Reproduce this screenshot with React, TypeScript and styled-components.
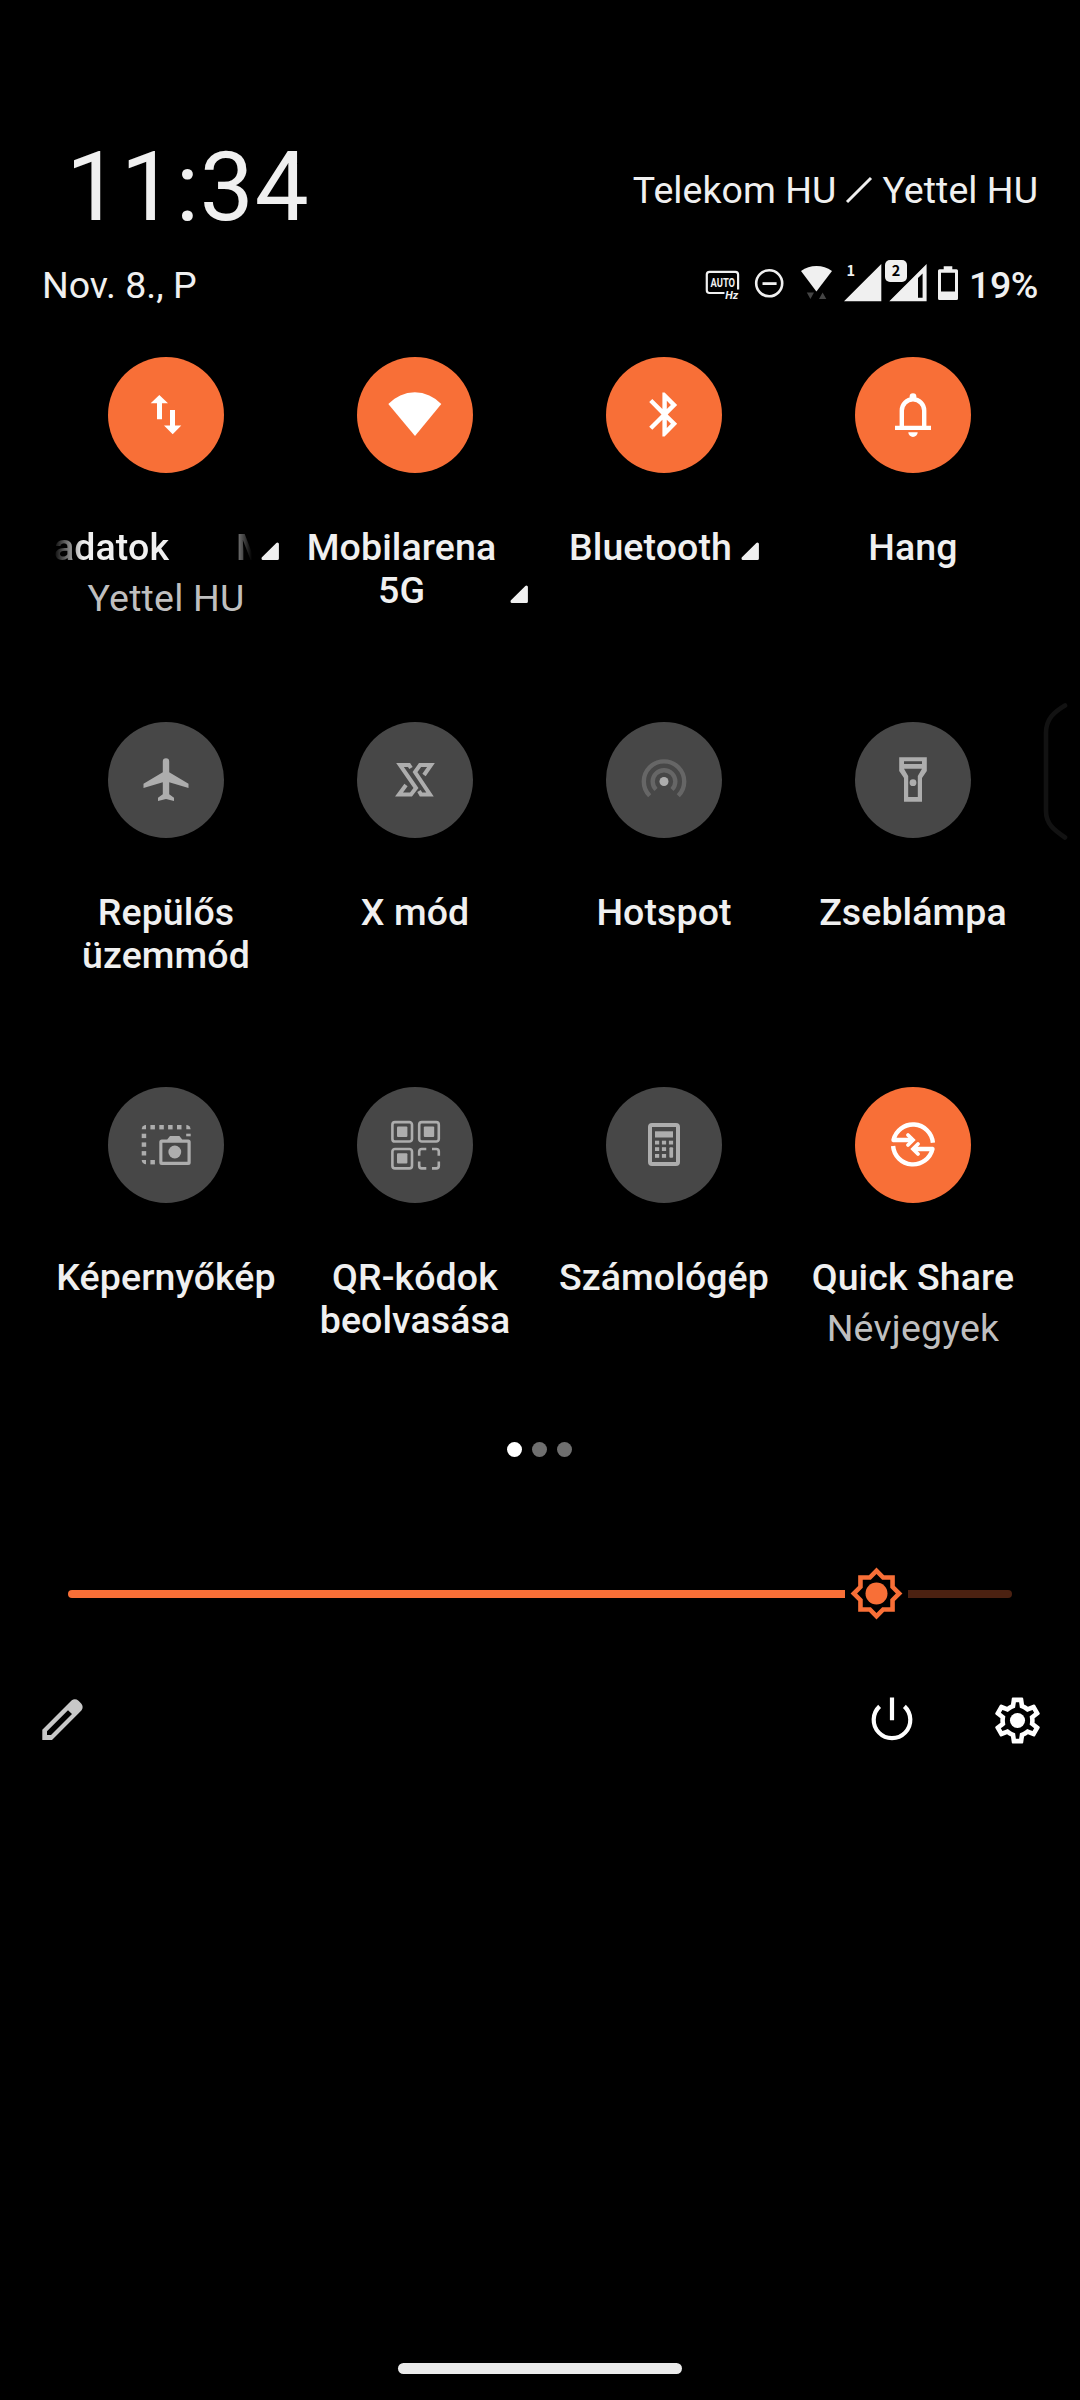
import React from "react";
import styled, { createGlobalStyle } from "styled-components";

const GlobalStyle = createGlobalStyle`
  *, *::before, *::after { box-sizing: border-box; }
  html, body { margin: 0; padding: 0; background: #000; }
  svg { display: block; flex: none; overflow: visible; }
`;

const ACCENT = "#f86f37";
const TEXT = "#f0f0f0";

const Screen = styled.div`
  position: relative;
  display: flex;
  flex-direction: column;
  width: 1080px;
  height: 2400px;
  padding-top: 137px;
  overflow: hidden;
  background: #000;
  color: ${TEXT};
  font-family: Roboto, "Noto Sans", sans-serif;
`;

const ClockRow = styled.header`
  display: flex;
  justify-content: space-between;
  align-items: flex-start;
  height: 100px;
  padding: 0 42px 0 66px;
`;

const Clock = styled.time`
  font-size: 96px;
  line-height: 100px;
  letter-spacing: 0.9px;
`;

const Carriers = styled.div`
  display: flex;
  margin-top: 31px;
  font-size: 37.5px;
  line-height: 44px;
  letter-spacing: 0.05px;
`;

const StatusRow = styled.div`
  display: flex;
  justify-content: space-between;
  align-items: flex-start;
  height: 44px;
  margin-top: 22px;
  padding: 0 42px 0 42px;
`;

const DateText = styled.span`
  margin-top: 4px;
  font-size: 37.5px;
  line-height: 44px;
`;

const StatusIcons = styled.div`
  display: flex;
  align-items: flex-start;
`;

const StatusIcon = styled.svg<{ $gap?: number }>`
  height: 44px;
  margin-left: ${(p) => p.$gap ?? 0}px;
`;

const BatteryLevel = styled.span`
  width: 69px;
  margin: 4px 0 0 10px;
  font-size: 37.5px;
  line-height: 44px;
  font-weight: 500;
  letter-spacing: -0.4px;
  white-space: nowrap;
`;

const TileGrid = styled.main`
  display: grid;
  grid-template-columns: repeat(4, 249px);
  grid-auto-rows: 365px;
  margin: 54px 0 0 41.5px;
`;

const TileBox = styled.section`
  display: flex;
  flex-direction: column;
  align-items: center;
  padding: 0 11.5px;
`;

const TileCircle = styled.div<{ $on?: boolean }>`
  display: flex;
  align-items: center;
  justify-content: center;
  flex: none;
  width: 116px;
  height: 116px;
  border-radius: 50%;
  background: ${(p) => (p.$on ? ACCENT : "#474747")};
  color: ${(p) => (p.$on ? "#fff" : "#adadad")};
`;

const LabelRow = styled.div`
  display: flex;
  align-items: flex-end;
  justify-content: center;
  max-width: 226px;
  margin-top: 52.5px;
`;

const Label = styled.span<{ $noWrap?: boolean }>`
  font-size: 37.5px;
  line-height: 43px;
  font-weight: 500;
  letter-spacing: 0.1px;
  text-align: center;
  white-space: ${(p) => (p.$noWrap ? "nowrap" : "normal")};
`;

const SubLabel = styled.span`
  margin-top: 8px;
  color: #bfbfbf;
  font-size: 37.5px;
  line-height: 43px;
  letter-spacing: 0.2px;
`;

const Marquee = styled.div`
  display: flex;
  gap: 67px;
  width: 199px;
  padding-left: 1px;
  overflow: hidden;
  mask-image: linear-gradient(90deg, transparent 0, #000 30px, #000 169px, transparent 199px);
`;

const Expand = styled.svg`
  width: 18px;
  height: 18px;
  margin: 0 0 8.5px 9px;
`;

const Pager = styled.nav`
  display: flex;
  justify-content: center;
  gap: 10px;
  height: 15px;
  margin-top: -10px;
  padding-right: 2px;
`;

const Dot = styled.span<{ $current?: boolean }>`
  width: 15px;
  height: 15px;
  border-radius: 50%;
  background: ${(p) => (p.$current ? "#fff" : "#6f6f6f")};
`;

const Slider = styled.div`
  display: flex;
  align-items: center;
  height: 55px;
  margin: 109px 68px 0;
`;

const Filled = styled.div`
  width: 777px;
  height: 8px;
  border-radius: 4px 0 0 4px;
  background: ${ACCENT};
`;

const Thumb = styled.svg`
  width: 55px;
  height: 55px;
  margin: 0 4px;
  color: ${ACCENT};
`;

const Remaining = styled.div`
  flex: 1;
  height: 8px;
  border-radius: 0 4px 4px 0;
  background: #4b2111;
`;

const Footer = styled.footer`
  display: flex;
  align-items: center;
  height: 56px;
  margin-top: 71px;
  padding: 0 35px 0 42px;
  color: #fff;
`;

const EditIcon = styled.svg`
  width: 42px;
  height: 42px;
  margin-right: auto;
  color: #c8c8c8;
`;

const PowerIcon = styled.svg`
  width: 56px;
  height: 56px;
  margin-right: 70px;
`;

const GearIcon = styled.svg`
  width: 55px;
  height: 55px;
`;

const HomeBar = styled.div`
  width: 284px;
  height: 11px;
  margin: auto auto 26px;
  border-radius: 6px;
  background: #ebebeb;
`;

const EdgeHandle = styled.svg`
  position: absolute;
  top: 700px;
  right: 10px;
  width: 30px;
  height: 144px;
`;

const TileSvg = ({ children }: { children: React.ReactNode }) => (
  <svg width="60" height="60" viewBox="-30 -30 60 60" fill="currentColor">
    {children}
  </svg>
);

const DataIcon = () => (
  <TileSvg>
    <path d="M-6.7-20L2-11.8H-4V4.2H-9V-11.8H-15.3z" />
    <path d="M4-5H9V10.6H15.3L6.7 19.3L-2 10.6H4z" />
  </TileSvg>
);

const WifiIcon = () => (
  <TileSvg>
    <path d="M0 21L-26.7-11A36 36 0 0 1 26.3-11z" />
  </TileSvg>
);

const BluetoothIcon = () => (
  <TileSvg>
    <path
      transform="translate(-25.8 -27) scale(2.2)"
      d="M17.71 7.71L12 2h-1v7.59L6.41 5 5 6.41 10.59 12 5 17.59 6.41 19 11 14.41V22h1l5.71-5.71-4.3-4.29 4.3-4.29zM13 5.83l1.88 1.88L13 9.59V5.83zm1.88 10.46L13 18.17v-3.76l1.88 1.88z"
    />
  </TileSvg>
);

const BellIcon = () => (
  <TileSvg>
    <path d="M-11.2 12V-4.5A11.2 11.2 0 0 1 11.2-4.5V12" fill="none" stroke="currentColor" strokeWidth="4.4" />
    <circle cx="0" cy="-18.3" r="3.4" />
    <path d="M-18 10.7H18V15H-18zM-4.7 17.2H4.7A4.7 4.7 0 0 1-4.7 17.2z" />
  </TileSvg>
);

const PlaneIcon = () => (
  <TileSvg>
    <path d="M-3.2-18.5A3.2 3.2 0 0 1 3.2-18.5V-7.8L22.5 3.7V8L3.2 2.3V14.3L8 17.8V21L0 19L-8 21V17.8L-3.2 14.3V2.3L-22.5 8V3.7L-3.2-7.8z" />
  </TileSvg>
);

const XModeIcon = () => (
  <TileSvg>
    <path
      d="M-4-12L-6-15H-15L1 8L-4 14.5H-16L-9 5"
      fill="none"
      stroke="currentColor"
      strokeWidth="4"
    />
    <path d="M9-5L16-15H5L0-8L15 14.5H6L4 11" fill="none" stroke="currentColor" strokeWidth="4" />
  </TileSvg>
);

const HotspotIcon = () => (
  <TileSvg>
    <g fill="none" stroke="#666" strokeWidth="4.4">
      <path d="M-14.3 15.8A20.2 20.2 0 1 1 14.3 15.8" />
      <path d="M-8 9.5A11.3 11.3 0 1 1 8 9.5" />
    </g>
    <circle cx="0" cy="1.5" r="4.5" />
  </TileSvg>
);

const FlashlightIcon = () => (
  <TileSvg>
    <path
      fillRule="evenodd"
      d="M-13.8-22.7H13.8V-9L9-2V21.7H-9V-2L-13.8-9zM-9-18.7V-16H9V-18.7zM-9-11.3L-4.8-4V17H4.8V-4L9-11.3z"
    />
    <circle cx="0" cy="2.7" r="3.4" />
  </TileSvg>
);

const ScreenshotIcon = () => (
  <TileSvg>
    <path d="M-20-20V-15.7H-24.3A4.3 4.3 0 0 1-20-20z" />
    <path d="M20.3-20A4.3 4.3 0 0 1 24.6-15.7H20.3z" />
    <path d="M-24.3 15H-20V19.3A4.3 4.3 0 0 1-24.3 15z" />
    {[-15.6, -6.7, 2.1, 11].map((x) => (
      <rect key={x} x={x} y="-20" width="4.5" height="4.4" />
    ))}
    {[-11.3, -2.6, 6.1].map((y) => (
      <rect key={y} x="-24.3" y={y} width="4.5" height="4.4" />
    ))}
    <rect x="-15.6" y="15" width="4.5" height="4.4" />
    <rect x="20.2" y="-11.3" width="4.5" height="2.6" />
    <path
      fillRule="evenodd"
      d="M-4.2-5.6H1.2L4-9H13.4L16.2-5.6H22.2A2.5 2.5 0 0 1 24.7-3.1V17.5A2.5 2.5 0 0 1 22.2 20H-4.2A2.5 2.5 0 0 1-6.7 17.5V-3.1A2.5 2.5 0 0 1-4.2-5.6zM-3.6-2.3V16.8H21.5V-2.3z"
    />
    <circle cx="8.8" cy="7" r="6.4" />
  </TileSvg>
);

const QrIcon = () => (
  <TileSvg>
    <g fill="none" stroke="currentColor" strokeWidth="2.6">
      <rect x="-22.6" y="-22.9" width="19.6" height="19.4" rx="2.6" />
      <rect x="4.2" y="-22.9" width="19.6" height="19.4" rx="2.6" />
      <rect x="-22.6" y="4" width="19.6" height="19.4" rx="2.6" />
      <path d="M11.3 4H6.8Q4.2 4 4.2 6.6V10.8M17 4H21.2Q23.8 4 23.8 6.6V10.8M4.2 16.5V20.8Q4.2 23.4 6.8 23.4H11.3M17 23.4H21.2Q23.8 23.4 23.8 20.8V16.5" />
    </g>
    <rect x="-18" y="-18.4" width="10.4" height="10.4" rx="1" />
    <rect x="8.8" y="-18.4" width="10.4" height="10.4" rx="1" />
    <rect x="-18" y="8.2" width="10.4" height="10.4" rx="1" />
  </TileSvg>
);

const CalculatorIcon = () => (
  <TileSvg>
    <rect x="-14" y="-20" width="28" height="39" rx="2" fill="none" stroke="currentColor" strokeWidth="4" />
    <rect x="-9" y="-13.7" width="18" height="6.2" />
    {[-4.3, 2.2, 9].map((y) => (
      <React.Fragment key={y}>
        <rect x="-9" y={y} width="4.2" height="3.8" />
        <rect x="-2.1" y={y} width="4.2" height="3.8" />
      </React.Fragment>
    ))}
    <rect x="4.9" y="-4.3" width="4.2" height="3.8" />
    <rect x="5.4" y="2.2" width="3.7" height="10.6" rx="1" />
  </TileSvg>
);

const QuickShareIcon = () => (
  <TileSvg>
    <g fill="none" stroke="currentColor" strokeWidth="4.4">
      <path d="M19.9-2.3A20 20 0 0 0-19.5-5H0" strokeLinejoin="round" />
      <path d="M-5-10L0-5L-5 0" strokeWidth="3.8" strokeLinecap="round" />
      <path d="M-19.9 1A20 20 0 0 0 19.5 4H1" strokeLinejoin="round" />
      <path d="M5-1L0 4L5 9" strokeWidth="3.8" strokeLinecap="round" />
    </g>
  </TileSvg>
);

const ExpandMark = () => (
  <Expand viewBox="0 0 18 18">
    <path
      d="M16.4 2V16.4H2z"
      fill={TEXT}
      stroke={TEXT}
      strokeWidth="3"
      strokeLinejoin="round"
    />
  </Expand>
);

type TileProps = {
  icon: React.ReactNode;
  label: React.ReactNode;
  sub?: string;
  on?: boolean;
  expandable?: boolean;
  noWrap?: boolean;
};

const Tile = ({ icon, label, sub, on, expandable, noWrap }: TileProps) => (
  <TileBox>
    <TileCircle $on={on}>{icon}</TileCircle>
    <LabelRow>
      <Label $noWrap={noWrap}>{label}</Label>
      {expandable && <ExpandMark />}
    </LabelRow>
    {sub && <SubLabel>{sub}</SubLabel>}
  </TileBox>
);

export default function App() {
  return (
    <Screen>
      <GlobalStyle />
      <ClockRow>
        <Clock>11:34</Clock>
        <Carriers>
          <span>Telekom HU</span>
          <svg width="46" height="44" viewBox="836 168 46 44">
            <path d="M847 202L871 178" stroke={TEXT} strokeWidth="3" />
          </svg>
          <span>Yettel HU</span>
        </Carriers>
      </ClockRow>

      <StatusRow>
        <DateText>Nov. 8., P</DateText>
        <StatusIcons>
          <StatusIcon width="36" viewBox="705 259 36 44">
            <path
              d="M724.5 293H709.5Q706.8 293 706.8 290.3V274.5Q706.8 271.8 709.5 271.8H735.4Q738.1 271.8 738.1 274.5V289.5"
              fill="none"
              stroke={TEXT}
              strokeWidth="2.2"
            />
            <text x="710.5" y="287" fontSize="12" fontWeight="700" fill={TEXT} textLength="24.5" lengthAdjust="spacingAndGlyphs">
              AUTO
            </text>
            <text x="725.3" y="299" fontSize="11" fontWeight="700" fontStyle="italic" fill={TEXT}>
              Hz
            </text>
          </StatusIcon>
          <StatusIcon $gap={13} width="30" viewBox="754 259 30 44">
            <circle cx="769.2" cy="283.3" r="13" fill="none" stroke={TEXT} strokeWidth="2.6" />
            <path d="M762.5 283.6H776.6" stroke={TEXT} strokeWidth="2.8" />
          </StatusIcon>
          <StatusIcon $gap={16} width="33" viewBox="800 259 33 44">
            <path d="M816.4 291.4L801 271A27 27 0 0 1 832 271z" fill={TEXT} />
            <path d="M806.8 292.4H814L810.4 299zM819 299H826.3L822.6 292.4z" fill="#444" />
          </StatusIcon>
          <StatusIcon $gap={10} width="39" viewBox="843 259 39 44">
            <path d="M844 301.3H881.3V264z" fill={TEXT} />
            <text x="846.5" y="276" fontSize="14.5" fontWeight="700" fontFamily="Noto Sans CJK SC, sans-serif" fill={TEXT}>
              1
            </text>
          </StatusIcon>
          <StatusIcon $gap={2} width="43" viewBox="884 259 43 44">
            <path
              fillRule="evenodd"
              d="M889.3 301.3H926.6V264zM918 278V297.7H922.6V273.4z"
              fill={TEXT}
            />
            <rect x="885" y="260" width="22" height="22" rx="5" fill={TEXT} />
            <text x="896" y="276" fontSize="14.5" fontWeight="700" textAnchor="middle" fontFamily="Noto Sans CJK SC, sans-serif" fill="#000">
              2
            </text>
          </StatusIcon>
          <StatusIcon $gap={10} width="22" viewBox="937 259 22 44">
            <path
              fillRule="evenodd"
              d="M943.7 266.3H952.3V269.3H956.5Q958 269.3 958 270.8V298.5Q958 300 956.5 300H939.5Q938 300 938 298.5V270.8Q938 269.3 939.5 269.3H943.7zM941 272.7V291.4H955V272.7z"
              fill={TEXT}
            />
          </StatusIcon>
          <BatteryLevel>19%</BatteryLevel>
        </StatusIcons>
      </StatusRow>

      <TileGrid>
        <Tile
          on
          expandable
          noWrap
          icon={<DataIcon />}
          label={
            <Marquee>
              <span>adatok</span>
              <span>M</span>
            </Marquee>
          }
          sub="Yettel HU"
        />
        <Tile on expandable icon={<WifiIcon />} label="Mobilarena 5G" />
        <Tile on expandable icon={<BluetoothIcon />} label="Bluetooth" />
        <Tile on icon={<BellIcon />} label="Hang" />
        <Tile icon={<PlaneIcon />} label="Repülős üzemmód" />
        <Tile icon={<XModeIcon />} label="X mód" />
        <Tile icon={<HotspotIcon />} label="Hotspot" />
        <Tile icon={<FlashlightIcon />} label="Zseblámpa" />
        <Tile icon={<ScreenshotIcon />} label="Képernyőkép" />
        <Tile icon={<QrIcon />} label="QR-kódok beolvasása" />
        <Tile icon={<CalculatorIcon />} label="Számológép" />
        <Tile on icon={<QuickShareIcon />} label="Quick Share" sub="Névjegyek" />
      </TileGrid>

      <Pager>
        <Dot $current />
        <Dot />
        <Dot />
      </Pager>

      <Slider>
        <Filled />
        <Thumb viewBox="0 0 24 24">
          <path
            fill="currentColor"
            fillRule="evenodd"
            d="M20 8.69V4h-4.69L12 .69 8.69 4H4v4.69L.69 12 4 15.31V20h4.69L12 23.31 15.31 20H20v-4.69L23.31 12 20 8.69zm-2 5.79V18h-3.52L12 20.48 9.52 18H6v-3.52L3.52 12 6 9.52V6h3.52L12 3.52 14.48 6H18v3.52L20.48 12 18 14.48z"
          />
          <circle cx="12" cy="12" r="4.8" fill="currentColor" />
        </Thumb>
        <Remaining />
      </Slider>

      <Footer>
        <EditIcon viewBox="0 0 42 42">
          <path
            fill="currentColor"
            fillRule="evenodd"
            d="M.3 30.7L29.5 1.6Q33 -1 36.5 1.8L39.2 4.5Q42 8 39.4 11.5L10 41H.3zM5 32.3V36H9L30 15L26 11.3z"
          />
        </EditIcon>
        <PowerIcon viewBox="0 0 56 56" fill="none" stroke="currentColor" strokeWidth="4.2">
          <path d="M28 5.5V28.3M15.6 14.4A18.3 18.3 0 1 0 40.4 14.4" />
        </PowerIcon>
        <GearIcon viewBox="0 0 24 24" fill="currentColor">
          <path
            fillRule="evenodd"
            d="M19.43 12.98c.04-.32.07-.64.07-.98 0-.34-.03-.66-.07-.98l2.11-1.65c.19-.15.24-.42.12-.64l-2-3.46a.5.5 0 0 0-.61-.22l-2.49 1c-.52-.4-1.08-.73-1.69-.98l-.38-2.65A.488.488 0 0 0 14 2h-4c-.25 0-.46.18-.49.42l-.38 2.65c-.61.25-1.17.59-1.69.98l-2.49-1a.566.566 0 0 0-.18-.03c-.17 0-.34.09-.43.25l-2 3.46c-.13.22-.07.49.12.64l2.11 1.65c-.04.32-.07.65-.07.98 0 .33.03.66.07.98l-2.11 1.65c-.19.15-.24.42-.12.64l2 3.46a.5.5 0 0 0 .61.22l2.49-1c.52.4 1.08.73 1.69.98l.38 2.65c.03.24.24.42.49.42h4c.25 0 .46-.18.49-.42l.38-2.65c.61-.25 1.17-.59 1.69-.98l2.49 1c.06.02.12.03.18.03.17 0 .34-.09.43-.25l2-3.46c.12-.22.07-.49-.12-.64l-2.11-1.65zm-1.98-1.71c.04.31.05.52.05.73 0 .21-.02.43-.05.73l-.14 1.13.89.7 1.08.84-.7 1.21-1.27-.51-1.04-.42-.9.68c-.43.32-.84.56-1.25.73l-1.06.43-.16 1.13-.2 1.35h-1.4l-.19-1.35-.16-1.13-1.06-.43c-.43-.18-.83-.41-1.23-.71l-.91-.7-1.06.43-1.27.51-.7-1.21 1.08-.84.89-.7-.14-1.13c-.03-.31-.05-.54-.05-.74s.02-.43.05-.73l.14-1.13-.89-.7-1.08-.84.7-1.21 1.27.51 1.04.42.9-.68c.43-.32.84-.56 1.25-.73l1.06-.43.16-1.13.2-1.35h1.39l.19 1.35.16 1.13 1.06.43c.43.18.83.41 1.23.71l.91.7 1.06-.43 1.27-.51.7 1.21-1.07.85-.89.7.14 1.13z"
          />
          <circle cx="12" cy="12" r="3.3" />
        </GearIcon>
      </Footer>

      <HomeBar />

      <EdgeHandle viewBox="1040 700 30 144">
        <path
          d="M1065 705.5C1054 712 1046 719 1046 733V811C1046 824 1054 830 1065 837.5"
          fill="none"
          stroke="#121212"
          strokeWidth="4.6"
          strokeLinecap="round"
        />
      </EdgeHandle>
    </Screen>
  );
}
